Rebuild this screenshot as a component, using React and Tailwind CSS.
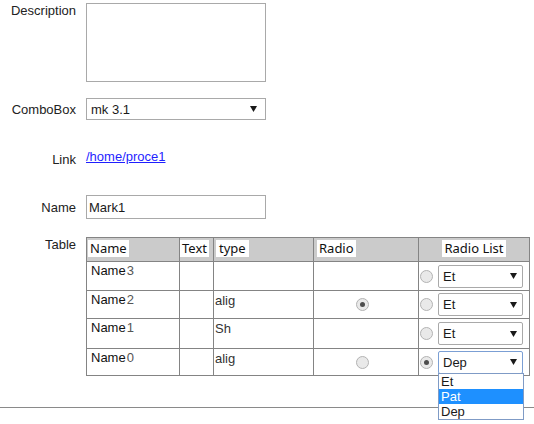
import React from 'react';

const rows = [
  { num: '3', type: '', radio: null, listChecked: false, value: 'Et', h: 'h-[29px]' },
  { num: '2', type: 'alig', radio: true, listChecked: false, value: 'Et', h: 'h-[28px]' },
  { num: '1', type: 'Sh', radio: null, listChecked: false, value: 'Et', h: 'h-[30px]' },
  { num: '0', type: 'alig', radio: false, listChecked: true, value: 'Dep', h: 'h-[27px]', open: true },
];

const options = ['Et', 'Pat', 'Dep'];

function Arrow() {
  return (
    <svg width="7" height="6" viewBox="0 0 7 6">
      <polygon points="0,0 7,0 3.5,6" fill="#1a1a1a" />
    </svg>
  );
}

function Radio({ checked }) {
  return (
    <span className="inline-flex w-[13px] h-[13px] rounded-full border border-[#b3b3b3] bg-[#e9e9e9] items-center justify-center">
      {checked && <span className="w-[5px] h-[5px] rounded-full bg-[#4d4d4d]" />}
    </span>
  );
}

function SmallSelect({ value, open }) {
  return (
    <div
      className={
        'relative w-[85px] h-[23px] border rounded-[2px] bg-white flex items-center justify-between pl-[4px] pr-[5px] ' +
        (open ? 'border-[#7b9fd4]' : 'border-[#a9a9a9]')
      }
    >
      <span className="text-[13px] leading-[15px] text-[#1a1a1a]">{value}</span>
      <Arrow />
      {open && (
        <div className="absolute left-[-1px] top-[21px] w-[86px] border border-[#7f9bc6] bg-white z-10">
          {options.map(o => (
            <div
              key={o}
              className={
                'h-[15px] leading-[15px] pl-[2px] text-[13px] ' +
                (o === 'Pat' ? 'bg-[#1e90ff] text-white' : 'text-[#1a1a1a]')
              }
            >
              {o}
            </div>
          ))}
        </div>
      )}
    </div>
  );
}

function HeadLabel({ children }) {
  return <span className="bg-white px-[2px] leading-[17px] inline-block">{children}</span>;
}

export default function App() {
  const cell = 'border-r border-b border-[#848484]';
  const head = cell + " bg-[#cbcbcb] pt-[1px] text-[13px] font-['Noto_Sans',sans-serif] text-[#111]";

  return (
    <div className="relative w-[534px] h-[424px] overflow-hidden bg-white font-['Liberation_Sans',Arial,sans-serif] text-[13px] text-[#222]">
      {/* Description */}
      <div className="flex items-start gap-[10px] pt-[3px]">
        <div className="w-[76px] text-right leading-[15px]">Description</div>
        <div className="w-[180px] h-[79px] border border-[#a9a9a9] bg-white" />
      </div>

      {/* ComboBox */}
      <div className="flex items-center gap-[10px] mt-[16px]">
        <div className="w-[76px] text-right leading-[15px] whitespace-nowrap">ComboBox</div>
        <div className="w-[180px] h-[22px] border border-[#a9a9a9] bg-white flex items-center justify-between pl-[4px] pr-[8px]">
          <span className="leading-[15px] text-[#1a1a1a]">mk 3.1</span>
          <Arrow />
        </div>
      </div>

      {/* Link */}
      <div className="flex items-start gap-[10px] mt-[29px]">
        <div className="w-[76px] text-right leading-[15px] pt-[3px]">Link</div>
        <a href="#" className="leading-[15px] text-[#1f1fff] underline">/home/proce1</a>
      </div>

      {/* Name */}
      <div className="flex items-center gap-[10px] mt-[28px]">
        <div className="w-[76px] text-right leading-[15px]">Name</div>
        <div className="w-[180px] h-[24px] border border-[#a9a9a9] bg-white flex items-center pl-[2px]">
          <span className="leading-[15px] text-[#1a1a1a]">Mark1</span>
        </div>
      </div>

      {/* Table */}
      <div className="flex items-start gap-[10px] mt-[18px]">
        <div className="w-[76px] text-right leading-[15px]">Table</div>
        <div className="grid grid-cols-[93px_34px_100px_105px_111px] w-[444px] border-l border-t border-[#848484]">
          <div className={head + ' h-[24px] pl-[1px]'}>
            <HeadLabel>Name</HeadLabel>
          </div>
          <div className={head}>
            <HeadLabel>Text</HeadLabel>
          </div>
          <div className={head + ' pl-[2px]'}>
            <HeadLabel>
              <span className="px-[1px]">type</span>
            </HeadLabel>
          </div>
          <div className={head + ' pl-[3px]'}>
            <HeadLabel>Radio</HeadLabel>
          </div>
          <div className={head + ' text-center'}>
            <HeadLabel>Radio List</HeadLabel>
          </div>

          {rows.map(r => (
            <React.Fragment key={r.num}>
              <div className={cell + ' ' + r.h + ' pl-[4px] pt-[1px] leading-[15px]'}>
                <span className="text-[#111]">Name</span>
                <span className="text-[#555] ml-[1px]">{r.num}</span>
              </div>
              <div className={cell + ' ' + r.h} />
              <div className={cell + ' ' + r.h + ' pl-[1px] pt-[2px] leading-[15px] text-[#333]'}>{r.type}</div>
              <div className={cell + ' ' + r.h + ' flex items-center pl-[42px]'}>
                {r.radio !== null && <Radio checked={r.radio} />}
              </div>
              <div className={cell + ' ' + r.h + ' flex items-center pl-[1px] gap-[5px]'}>
                <Radio checked={r.listChecked} />
                <SmallSelect value={r.value} open={r.open} />
              </div>
            </React.Fragment>
          ))}
        </div>
      </div>

      <div className="mt-[31px] h-px bg-[#8a8a8a]" />
    </div>
  );
}
